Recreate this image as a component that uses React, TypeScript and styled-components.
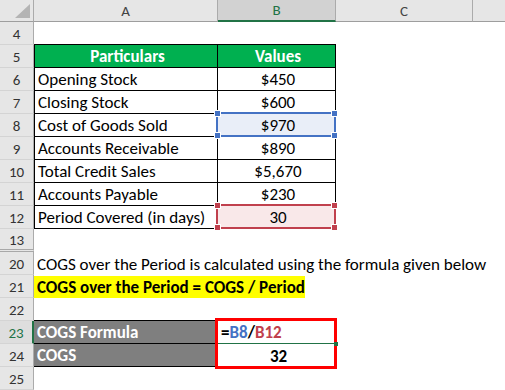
import styled, { createGlobalStyle } from "styled-components";

const GlobalStyle = createGlobalStyle`
  html, body {
    margin: 0;
    padding: 0;
    background: #fff;
    overflow: hidden;
  }
  body {
    font-family: Carlito, Calibri, Lato, "Liberation Sans", sans-serif;
  }
`;

const cols = "34px 184px 118px 137px 74px";

const Sheet = styled.div`
  width: 505px;
  height: 390px;
  overflow: hidden;
  background: #fff;
`;

const HeadRow = styled.div`
  display: grid;
  grid-template-columns: ${cols};
  height: 22px;
`;

const Corner = styled.div`
  position: relative;
  box-sizing: border-box;
  background: #e6e6e6;
  border-right: 1px solid #ababab;
  border-bottom: 1px solid #9e9e9e;

  &::after {
    content: "";
    position: absolute;
    right: 3px;
    bottom: 3px;
    border-style: solid;
    border-width: 0 0 14px 15px;
    border-color: transparent transparent #b4b4b4 transparent;
  }
`;

const ColHead = styled.div<{ $active?: boolean }>`
  box-sizing: border-box;
  display: flex;
  align-items: center;
  justify-content: center;
  font-size: 15px;
  color: ${(p) => (p.$active ? "#217346" : "#444")};
  background: ${(p) => (p.$active ? "#d2d2d2" : "#e6e6e6")};
  border-right: 1px solid #ababab;
  border-bottom: ${(p) => (p.$active ? "2px solid #217346" : "1px solid #9e9e9e")};
`;

const Row = styled.div`
  display: grid;
  grid-template-columns: ${cols};
  height: 23px;
`;

const RowNum = styled.div<{ $active?: boolean; $hidden?: boolean }>`
  box-sizing: border-box;
  display: flex;
  align-items: center;
  justify-content: center;
  padding-top: 1px;
  font-size: 15px;
  color: ${(p) => (p.$active ? "#217346" : "#333")};
  background: ${(p) => (p.$active ? "#dedede" : "#e6e6e6")};
  border-right: ${(p) => (p.$active ? "2px solid #217346" : "1px solid #ababab")};
  border-bottom: ${(p) => (p.$hidden ? "3px double #a8a8a8" : "1px solid #d4d4d4")};
`;

type CellProps = {
  $align?: "left" | "center";
  $bold?: boolean;
  $fill?: string;
  $color?: string;
  $box?: boolean;
  $edge?: boolean;
  $under?: string;
};

const Cell = styled.div<CellProps>`
  position: relative;
  box-sizing: border-box;
  display: flex;
  align-items: center;
  justify-content: ${(p) => (p.$align === "center" ? "center" : "flex-start")};
  padding: 1px 0 0 3px;
  font-size: 17px;
  font-weight: ${(p) => (p.$bold ? 700 : 400)};
  color: ${(p) => p.$color || "#000"};
  background: ${(p) => p.$fill || "transparent"};
  white-space: nowrap;
  border-left: ${(p) => (p.$edge ? "1px solid #000" : "none")};
  border-right: ${(p) => (p.$box ? "1px solid #000" : "none")};
  border-bottom: ${(p) =>
    p.$under ? `1px solid ${p.$under}` : p.$box ? "1px solid #000" : "none"};
`;

const Highlight = styled.span`
  display: flex;
  align-items: center;
  height: 100%;
  width: 279px;
  margin-left: -3px;
  padding-left: 3px;
  box-sizing: border-box;
  background: #ffff00;
  font-weight: 700;
`;

const Ref = styled.span<{ $color: string }>`
  color: ${(p) => p.$color};
`;

const SelBox = styled.div<{ $color: string }>`
  position: absolute;
  top: -2px;
  left: -2px;
  right: -1px;
  bottom: -1px;
  border: 2px solid ${(p) => p.$color};
  pointer-events: none;
  z-index: 2;
`;

const Handle = styled.i<{ $color: string; $x: "left" | "right"; $y: "top" | "bottom" }>`
  position: absolute;
  width: 5px;
  height: 5px;
  background: ${(p) => p.$color};
  border: 1px solid #fff;
  ${(p) => p.$x}: -4px;
  ${(p) => p.$y}: -4px;
`;

const RedFrame = styled.div`
  position: absolute;
  top: -3px;
  left: -3px;
  width: 122px;
  height: 51px;
  box-sizing: border-box;
  border: 3px solid #ff0000;
  z-index: 3;
  pointer-events: none;
`;

const EditHandle = styled.i`
  position: absolute;
  right: -2px;
  bottom: -3px;
  width: 4px;
  height: 4px;
  background: #217346;
  z-index: 4;
`;

const Selection = ({ color }: { color: string }) => (
  <SelBox $color={color}>
    <Handle $color={color} $x="left" $y="top" />
    <Handle $color={color} $x="right" $y="top" />
    <Handle $color={color} $x="left" $y="bottom" />
    <Handle $color={color} $x="right" $y="bottom" />
  </SelBox>
);

const data: [number, string, string, string?][] = [
  [6, "Opening Stock", "$450"],
  [7, "Closing Stock", "$600"],
  [8, "Cost of Goods Sold", "$970", "blue"],
  [9, "Accounts Receivable", "$890"],
  [10, "Total Credit Sales", "$5,670"],
  [11, "Accounts Payable", "$230"],
  [12, "Period Covered (in days)", "30", "red"],
];

const selColors: Record<string, { line: string; fill: string }> = {
  blue: { line: "#4472c4", fill: "#e9eef8" },
  red: { line: "#c0404d", fill: "#f9e8e9" },
};

const Empty = () => (
  <>
    <Cell />
    <Cell />
  </>
);

export default function App() {
  return (
    <Sheet>
      <GlobalStyle />
      <HeadRow>
        <Corner />
        <ColHead>A</ColHead>
        <ColHead $active>B</ColHead>
        <ColHead>C</ColHead>
        <ColHead style={{ color: "#b8782c" }}>D</ColHead>
      </HeadRow>

      <Row>
        <RowNum>4</RowNum>
        <Cell $under="#000" />
        <Cell $under="#000" />
        <Empty />
      </Row>

      <Row>
        <RowNum>5</RowNum>
        <Cell $box $edge $bold $align="center" $fill="#00b050" $color="#fff">
          Particulars
        </Cell>
        <Cell $box $bold $align="center" $fill="#00b050" $color="#fff">
          Values
        </Cell>
        <Empty />
      </Row>

      {data.map(([n, label, value, sel]) => (
        <Row key={n}>
          <RowNum>{n}</RowNum>
          <Cell $box $edge>
            {label}
          </Cell>
          <Cell $box $align="center" $fill={sel ? selColors[sel].fill : undefined}>
            {value}
            {sel && <Selection color={selColors[sel].line} />}
          </Cell>
          <Empty />
        </Row>
      ))}

      <Row>
        <RowNum $hidden>13</RowNum>
        <Cell />
        <Empty />
        <Cell />
      </Row>

      <Row>
        <RowNum>20</RowNum>
        <Cell>COGS over the Period is calculated using the formula given below</Cell>
        <Empty />
        <Cell />
      </Row>

      <Row>
        <RowNum>21</RowNum>
        <Cell>
          <Highlight>COGS over the Period = COGS / Period</Highlight>
        </Cell>
        <Empty />
        <Cell />
      </Row>

      <Row>
        <RowNum>22</RowNum>
        <Cell $under="#000" />
        <Cell $under="#000" />
        <Empty />
      </Row>

      <Row>
        <RowNum $active>23</RowNum>
        <Cell $bold $fill="#7f7f7f" $color="#fff" $under="#000">
          COGS Formula
        </Cell>
        <Cell $bold $under="#217346">
          =<Ref $color="#4472c4">B8</Ref>/<Ref $color="#c0404d">B12</Ref>
          <RedFrame />
          <EditHandle />
        </Cell>
        <Empty />
      </Row>

      <Row>
        <RowNum>24</RowNum>
        <Cell $bold $fill="#7f7f7f" $color="#fff" $under="#000">
          COGS
        </Cell>
        <Cell $bold $align="center">
          32
        </Cell>
        <Empty />
      </Row>

      <Row>
        <RowNum>25</RowNum>
        <Empty />
        <Empty />
      </Row>
    </Sheet>
  );
}
